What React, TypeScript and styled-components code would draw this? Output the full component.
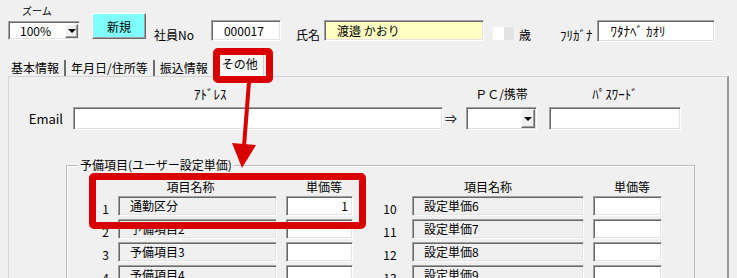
import React from "react";
import styled, { createGlobalStyle, css } from "styled-components";

const GlobalStyle = createGlobalStyle`
  html, body { margin: 0; padding: 0; background: #f0f0f0; }
  body {
    font-family: "Noto Sans CJK JP", "Noto Sans", sans-serif;
    font-size: 12px;
    color: #000;
  }
`;

const sunken = css`
  box-sizing: border-box;
  border: 1px solid;
  border-color: #a0a0a0 #ffffff #ffffff #a0a0a0;
  box-shadow: inset 1px 1px 0 #696969, inset -1px -1px 0 #e3e3e3;
`;

const raised = css`
  box-sizing: border-box;
  border: 1px solid;
  border-color: #ffffff #696969 #696969 #ffffff;
  box-shadow: inset -1px -1px 0 #a0a0a0;
`;

const Screen = styled.div`
  position: relative;
  width: 737px;
  height: 278px;
  overflow: hidden;
  background: #f0f0f0;
`;

/* ---------- top bar ---------- */
const TopBar = styled.div`
  display: flex;
  align-items: flex-start;
  height: 50px;
  padding-left: 8px;
  box-sizing: border-box;
`;

const ZoomGroup = styled.div`
  display: flex;
  flex-direction: column;
  width: 72px;
`;

const ZoomCaption = styled.div`
  margin: 4px 0 4px 14px;
  height: 13px;
  line-height: 13px;
  font-size: 10px;
`;

const Select = styled.div<{ $w: number; $h: number }>`
  ${sunken};
  display: flex;
  align-items: center;
  width: ${(p) => p.$w}px;
  height: ${(p) => p.$h}px;
  background: #fff;
`;

const SelectValue = styled.span`
  flex: 1;
  padding-left: 11px;
  font-size: 12px;
  line-height: 14px;
`;

const DropButton = styled.span<{ $w: number; $h: number }>`
  ${raised};
  display: flex;
  align-items: center;
  justify-content: center;
  width: ${(p) => p.$w}px;
  height: ${(p) => p.$h}px;
  margin-right: 1px;
  background: #f0f0f0;
`;

const Caret = styled.span`
  width: 0;
  height: 0;
  border-left: 4px solid transparent;
  border-right: 4px solid transparent;
  border-top: 4px solid #000;
`;

const NewButton = styled.button`
  ${raised};
  margin: 13px 0 0 12px;
  width: 54px;
  height: 26px;
  padding: 0;
  background: #80ffff;
  font-family: inherit;
  font-size: 12px;
  color: #000;
`;

const FieldLabel = styled.span<{ $ml: number; $size?: number }>`
  margin: 28px 0 0 ${(p) => p.$ml}px;
  line-height: 14px;
  font-size: ${(p) => p.$size ?? 12}px;
  white-space: nowrap;
`;

const TextBox = styled.div<{
  $w: number;
  $h: number;
  $ml: number;
  $bg?: string;
  $size?: number;
}>`
  ${sunken};
  display: flex;
  align-items: center;
  margin-left: ${(p) => p.$ml}px;
  width: ${(p) => p.$w}px;
  height: ${(p) => p.$h}px;
  padding: 0 8px 0 12px;
  background: ${(p) => p.$bg ?? "#fff"};
  font-size: ${(p) => p.$size ?? 12}px;
  line-height: 14px;
  white-space: nowrap;
`;

const TopBox = styled(TextBox)`
  margin-top: 20px;
`;

const AgeBox = styled.div`
  margin: 27px 0 0 9px;
  width: 21px;
  height: 13px;
  background: linear-gradient(to right, #ffffff 0 11px, #e3e3e3 11px 21px);
`;

/* ---------- tabs ---------- */
const TabBar = styled.div`
  display: flex;
  align-items: flex-end;
  height: 26px;
  padding-left: 11px;
  box-sizing: border-box;
`;

const Tab = styled.div<{ $sep?: boolean }>`
  height: 16px;
  padding: 0 5px;
  line-height: 15px;
  font-size: 12px;
  white-space: nowrap;
  border-right: ${(p) => (p.$sep ? "2px solid #6e6e6e" : "none")};
  &:first-child {
    padding-left: 0;
  }
`;

const ActiveTab = styled.div`
  position: relative;
  z-index: 1;
  margin: 0 0 -1px 3px;
  width: 48px;
  height: 26px;
  box-sizing: border-box;
  border: 1px solid #d0d0d0;
  border-bottom: none;
  background: #f7f7f7;
  text-align: center;
  line-height: 23px;
  font-size: 12px;
`;

const Panel = styled.div`
  margin-left: 8px;
  width: 721px;
  height: 210px;
  box-sizing: border-box;
  border: 1px solid #d5d5d5;
  border-right: 2px solid #9a9a9a;
  padding-top: 10px;
  background: #f0f0f0;
`;

/* ---------- email ---------- */
const EmailGrid = styled.div`
  display: grid;
  grid-template-columns: 64px 370px 23px 71px 12px 132px;
  grid-template-rows: 14px 23px;
  row-gap: 6px;
  align-items: center;
`;

const ColHead = styled.div<{ $col: number; $offset?: number; $size?: number }>`
  grid-row: 1;
  grid-column: ${(p) => p.$col};
  line-height: 14px;
  font-size: ${(p) => p.$size ?? 12}px;
  white-space: nowrap;
  text-align: ${(p) => (p.$offset !== undefined ? "left" : "center")};
  padding-left: ${(p) => p.$offset ?? 0}px;
`;

const EmailLabel = styled.div`
  grid-row: 2;
  grid-column: 1;
  text-align: right;
  padding-right: 10px;
  font-size: 13px;
  line-height: 14px;
`;

const Arrow = styled.div`
  grid-row: 2;
  grid-column: 3;
  padding-left: 2px;
  font-size: 12px;
  line-height: 14px;
`;

const GridInput = styled.div<{ $col: number }>`
  ${sunken};
  grid-row: 2;
  grid-column: ${(p) => p.$col};
  height: 23px;
  background: #fff;
`;

const GridSelect = styled(Select)`
  grid-row: 2;
  grid-column: 4;
`;

/* ---------- group ---------- */
const Group = styled.fieldset`
  margin: 28px 0 0 57px;
  width: 629px;
  box-sizing: border-box;
  border: 1px solid #bdbdbd;
  box-shadow: inset 1px 1px 0 #ffffff;
  padding: 8px 0 0 26px;
  min-inline-size: 0;
`;

const Legend = styled.legend`
  margin-left: -15px;
  padding: 0 2px;
  line-height: 14px;
  font-size: 12px;
`;

const Columns = styled.div`
  display: flex;
  gap: 25px;
`;

const Column = styled.div`
  display: flex;
  flex-direction: column;
  gap: 3px;
`;

const HeadRow = styled.div`
  display: flex;
  height: 13px;
  line-height: 13px;
  font-size: 12px;
`;

const HeadCell = styled.div<{ $w: number; $ml?: number; $pl?: number; $pr?: number }>`
  box-sizing: border-box;
  width: ${(p) => p.$w}px;
  margin-left: ${(p) => p.$ml ?? 0}px;
  padding-left: ${(p) => p.$pl ?? 0}px;
  padding-right: ${(p) => p.$pr ?? 0}px;
  text-align: center;
  white-space: nowrap;
`;

const Row = styled.div`
  display: flex;
  height: 20px;
`;

const RowNum = styled.div<{ $w: number; $pr: number }>`
  box-sizing: border-box;
  width: ${(p) => p.$w}px;
  padding: 6px ${(p) => p.$pr}px 0 0;
  text-align: center;
  line-height: 14px;
  font-size: 12px;
`;

const NameBox = styled.div<{ $w: number }>`
  ${sunken};
  width: ${(p) => p.$w}px;
  height: 20px;
  padding-left: 11px;
  background: #f0f0f0;
  line-height: 18px;
  font-size: 12px;
  white-space: nowrap;
`;

const PriceBox = styled.div<{ $w: number }>`
  ${sunken};
  margin-left: 9px;
  width: ${(p) => p.$w}px;
  height: 20px;
  padding-right: 4px;
  background: #fff;
  text-align: right;
  line-height: 18px;
  font-size: 12px;
`;

/* ---------- annotations ---------- */
const Highlight = styled.div<{ $x: number; $y: number; $w: number; $h: number }>`
  position: absolute;
  left: ${(p) => p.$x}px;
  top: ${(p) => p.$y}px;
  width: ${(p) => p.$w}px;
  height: ${(p) => p.$h}px;
  box-sizing: border-box;
  border: 7px solid #d80000;
  border-radius: 5px;
  pointer-events: none;
  z-index: 5;
`;

const ArrowSvg = styled.svg`
  position: absolute;
  left: 226px;
  top: 80px;
  width: 40px;
  height: 92px;
  z-index: 5;
  pointer-events: none;
`;

type Item = { no: number; name: string; price: string };

const leftItems: Item[] = [
  { no: 1, name: "通勤区分", price: "1" },
  { no: 2, name: "予備項目2", price: "" },
  { no: 3, name: "予備項目3", price: "" },
  { no: 4, name: "予備項目4", price: "" },
];

const rightItems: Item[] = [
  { no: 10, name: "設定単価6", price: "" },
  { no: 11, name: "設定単価7", price: "" },
  { no: 12, name: "設定単価8", price: "" },
  { no: 13, name: "設定単価9", price: "" },
];

type ColSpec = { numW: number; numPr: number; nameW: number; priceW: number; headPr: number };

const ItemColumn: React.FC<{ items: Item[]; spec: ColSpec }> = ({ items, spec }) => (
  <Column>
    <HeadRow>
      <HeadCell $w={spec.numW} />
      <HeadCell $w={spec.nameW} $pr={spec.headPr}>
        項目名称
      </HeadCell>
      <HeadCell $w={spec.priceW} $ml={9} $pl={9}>
        単価等
      </HeadCell>
    </HeadRow>
    {items.map((it) => (
      <Row key={it.no}>
        <RowNum $w={spec.numW} $pr={spec.numPr}>
          {it.no}
        </RowNum>
        <NameBox $w={spec.nameW}>{it.name}</NameBox>
        <PriceBox $w={spec.priceW}>{it.price}</PriceBox>
      </Row>
    ))}
  </Column>
);

export default function App() {
  return (
    <Screen>
      <GlobalStyle />
      <TopBar>
        <ZoomGroup>
          <ZoomCaption>ズーム</ZoomCaption>
          <Select $w={72} $h={19}>
            <SelectValue>100%</SelectValue>
            <DropButton $w={13} $h={14}>
              <Caret />
            </DropButton>
          </Select>
        </ZoomGroup>
        <NewButton>新規</NewButton>
        <FieldLabel $ml={8}>社員No</FieldLabel>
        <TopBox $ml={17} $w={70} $h={21}>
          000017
        </TopBox>
        <FieldLabel $ml={15}>氏名</FieldLabel>
        <TopBox $ml={4} $w={160} $h={21} $bg="#ffffc4">
          渡邉 かおり
        </TopBox>
        <AgeBox />
        <FieldLabel $ml={5}>歳</FieldLabel>
        <FieldLabel $ml={29} $size={13}>
          ﾌﾘｶﾞﾅ
        </FieldLabel>
        <TopBox $ml={5} $w={118} $h={22} $size={13}>
          ﾜﾀﾅﾍﾞ ｶｵﾘ
        </TopBox>
      </TopBar>

      <TabBar>
        <Tab $sep>基本情報</Tab>
        <Tab $sep>年月日/住所等</Tab>
        <Tab>振込情報</Tab>
        <ActiveTab>その他</ActiveTab>
      </TabBar>

      <Panel>
        <EmailGrid>
          <ColHead $col={2} $offset={121} $size={13}>
            ｱﾄﾞﾚｽ
          </ColHead>
          <ColHead $col={4}>ＰＣ/携帯</ColHead>
          <ColHead $col={6} $size={13}>
            ﾊﾟｽﾜｰﾄﾞ
          </ColHead>
          <EmailLabel>Email</EmailLabel>
          <GridInput $col={2} />
          <Arrow>⇒</Arrow>
          <GridSelect $w={71} $h={23}>
            <SelectValue />
            <DropButton $w={14} $h={19}>
              <Caret />
            </DropButton>
          </GridSelect>
          <GridInput $col={6} />
        </EmailGrid>

        <Group>
          <Legend>予備項目(ユーザー設定単価)</Legend>
          <Columns>
            <ItemColumn
              items={leftItems}
              spec={{ numW: 25, numPr: 0, nameW: 159, priceW: 67, headPr: 14 }}
            />
            <ItemColumn
              items={rightItems}
              spec={{ numW: 34, numPr: 10, nameW: 172, priceW: 69, headPr: 20 }}
            />
          </Columns>
        </Group>
      </Panel>

      <Highlight $x={213} $y={48} $w={60} $h={35} />
      <Highlight $x={89} $y={173} $w={277} $h={56} />
      <ArrowSvg viewBox="0 0 40 92">
        <line x1="23" y1="2" x2="18" y2="66" stroke="#d80000" strokeWidth="4" />
        <polygon points="6,63 30,65 16,88" fill="#d80000" />
      </ArrowSvg>
    </Screen>
  );
}
